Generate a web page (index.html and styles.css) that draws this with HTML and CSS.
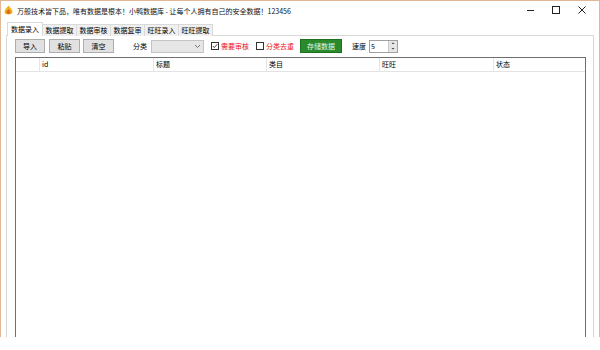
FILE: index.html
```html
<!DOCTYPE html>
<html>
<head>
<meta charset="utf-8">
<link rel="stylesheet" href="styles.css">
</head>
<body>
<div class="window">
  <div class="titlebar">
    <svg class="appicon" width="9" height="10" viewBox="0 0 9 10">
      <path d="M4.5 0.5 C6.5 3 8.5 4.5 8.5 6.8 C8.5 8.6 6.8 9.6 4.5 9.6 C2.2 9.6 0.5 8.6 0.5 6.8 C0.5 4.5 2.5 3 4.5 0.5 Z" fill="#f2b41c"/>
      <path d="M4.5 4 C5.6 5.4 6.6 6.2 6.6 7.3 C6.6 8.3 5.7 8.8 4.5 8.8 C3.3 8.8 2.4 8.3 2.4 7.3 C2.4 6.2 3.4 5.4 4.5 4 Z" fill="#e0661a"/>
    </svg>
    <span class="title">万般技术皆下品，唯有数据是根本！小鸭数据库 - 让每个人拥有自己的安全数据！123456</span>
    <div class="controls">
      <svg class="ctl" width="26" height="19" viewBox="0 0 26 19"><line x1="10" y1="9.5" x2="17" y2="9.5" stroke="#222" stroke-width="1"/></svg>
      <svg class="ctl" width="26" height="19" viewBox="0 0 26 19"><rect x="9.5" y="5.5" width="7" height="7" fill="none" stroke="#222" stroke-width="1"/></svg>
      <svg class="ctl" width="26" height="19" viewBox="0 0 26 19"><path d="M9.5 5.5 L16.5 12.5 M16.5 5.5 L9.5 12.5" stroke="#222" stroke-width="1"/></svg>
    </div>
  </div>
  <div class="body">
    <div class="tabs">
      <div class="tab active">数据录入</div>
      <div class="tab">数据提取</div>
      <div class="tab">数据审核</div>
      <div class="tab">数据复审</div>
      <div class="tab">旺旺录入</div>
      <div class="tab">旺旺提取</div>
    </div>
    <div class="panel">
      <div class="toolbar">
        <div class="btn b1">导入</div>
        <div class="btn b2">粘贴</div>
        <div class="btn b3">清空</div>
        <span class="label lbl-cat">分类</span>
        <div class="combo">
          <svg width="7" height="5" viewBox="0 0 7 5"><path d="M1 1 L3.5 3.5 L6 1" fill="none" stroke="#666" stroke-width="0.9"/></svg>
        </div>
        <span class="check checked">
          <svg width="8" height="8" viewBox="0 0 8 8"><rect x="0.5" y="0.5" width="7" height="7" fill="#fff" stroke="#333"/><path d="M1.8 4 L3.3 5.6 L6.3 2.2" fill="none" stroke="#333" stroke-width="0.9"/></svg>
        </span>
        <span class="red">需要审核</span>
        <span class="check c2">
          <svg width="8" height="8" viewBox="0 0 8 8"><rect x="0.5" y="0.5" width="7" height="7" fill="#fff" stroke="#333"/></svg>
        </span>
        <span class="red">分类去重</span>
        <div class="gbtn">存储数据</div>
        <span class="label lbl-speed">速度</span>
        <div class="spin">
          <span class="val">5</span>
          <div class="arrows">
            <svg width="8" height="12" viewBox="0 0 8 12"><rect x="0" y="0" width="8" height="6" fill="#e6e6e6"/><rect x="0" y="6" width="8" height="6" fill="#e6e6e6"/><path d="M2.5 4 L4 2.5 L5.5 4Z M2.5 8 L4 9.5 L5.5 8Z" fill="#444"/></svg>
          </div>
        </div>
      </div>
      <div class="list">
        <div class="header">
          <div class="col c0"></div>
          <div class="col c1">id</div>
          <div class="col c2w">标题</div>
          <div class="col c3">类目</div>
          <div class="col c4">旺旺</div>
          <div class="col c5">状态</div>
        </div>
      </div>
    </div>
  </div>
</div>
</body>
</html>
```
FILE: styles.css
```css
html, body {
  margin: 0;
  padding: 0;
  background: #ffffff;
}
body {
  font-family: "Noto Sans CJK SC", "Noto Sans", sans-serif;
  font-size: 7px;
  color: #000;
}
.window {
  width: 600px;
  height: 337px;
  box-sizing: border-box;
  border: 1px solid #e2b796;
  border-bottom: none;
  background: #fff;
  overflow: hidden;
  display: flex;
  flex-direction: column;
}
.titlebar {
  height: 19px;
  display: flex;
  align-items: center;
  flex: none;
}
.appicon {
  margin-left: 3px;
  margin-top: -1px;
}
.title {
  margin-left: 4px;
  font-size: 7px;
  line-height: 10px;
  color: #111;
  white-space: nowrap;
}
.controls {
  margin-left: auto;
  display: flex;
  margin-right: 4px;
  margin-top: -1px;
}
.ctl { display: block; }
.body {
  flex: 1;
  display: flex;
  flex-direction: column;
  padding: 3px 5px 0 5px;
  min-height: 0;
}
.tabs {
  display: flex;
  align-items: flex-end;
  height: 13px;
  padding-left: 2px;
  position: relative;
  z-index: 1;
  margin-bottom: -1px;
}
.tab {
  height: 11px;
  line-height: 11px;
  padding: 0 2.5px;
  border: 1px solid #d9d9d9;
  border-bottom: none;
  margin-right: -1px;
  background: #f0f0f0;
  white-space: nowrap;
  color: #000;
}
.tab.active {
  height: 13px;
  line-height: 12px;
  background: #fff;
  margin-left: -1px;
  padding: 0 3px;
  position: relative;
  z-index: 2;
}
.panel {
  flex: 1;
  border: 1px solid #d9d9d9;
  border-bottom: none;
  background: #fff;
  padding: 3px 7px 0 8px;
  display: flex;
  flex-direction: column;
  min-height: 0;
}
.toolbar {
  height: 14px;
  display: flex;
  align-items: center;
  flex: none;
}
.btn {
  height: 14px;
  box-sizing: border-box;
  border: 1px solid #adadad;
  background: #e1e1e1;
  display: flex;
  align-items: center;
  justify-content: center;
  line-height: 1;
}
.b1 { width: 30px; }
.b2 { width: 31px; margin-left: 4px; }
.b3 { width: 31px; margin-left: 3px; }
.label { white-space: nowrap; }
.lbl-cat { margin-left: 19px; }
.combo {
  margin-left: 4px;
  width: 53px;
  height: 13px;
  box-sizing: border-box;
  border: 1px solid #c4c4c4;
  background: #e6e6e6;
  display: flex;
  align-items: center;
  justify-content: flex-end;
  padding-right: 2px;
}
.combo svg { display: block; }
.check { display: flex; align-items: center; }
.check svg { display: block; }
.checked { margin-left: 7px; margin-right: 2px; }
.c2 { margin-left: 7px; margin-right: 2px; }
.red { color: #e8141c; white-space: nowrap; }
.gbtn {
  margin-left: 6px;
  width: 42px;
  height: 14px;
  box-sizing: border-box;
  background: #2b8a2b;
  border: 1px solid #1e701e;
  color: #e6f6e6;
  display: flex;
  align-items: center;
  justify-content: center;
  white-space: nowrap;
}
.lbl-speed { margin-left: 10px; }
.spin {
  margin-left: 3px;
  width: 29px;
  height: 13px;
  box-sizing: border-box;
  border: 1px solid #a0a0a0;
  background: #fff;
  display: flex;
  align-items: center;
}
.spin .val { margin-left: 1px; flex: 1; line-height: 1; }
.spin .arrows {
  width: 8px;
  height: 11px;
  border-left: 1px solid #c8c8c8;
  overflow: hidden;
  display: flex;
  align-items: center;
}
.spin .arrows svg { display: block; }
.list {
  margin-top: 4px;
  flex: 1;
  border: 1px solid #6e6e6e;
  border-bottom: none;
  background: #fff;
}
.header {
  display: flex;
  height: 13px;
  border-bottom: 1px solid #e3e3e3;
}
.col {
  box-sizing: border-box;
  border-right: 1px solid #e5e5e5;
  padding-left: 2px;
  line-height: 13px;
  white-space: nowrap;
}
.c0 { width: 24px; }
.c1 { width: 114px; }
.c2w { width: 113px; }
.c3 { width: 113px; }
.c4 { width: 114px; }
.c5 { flex: 1; border-right: none; }
```
